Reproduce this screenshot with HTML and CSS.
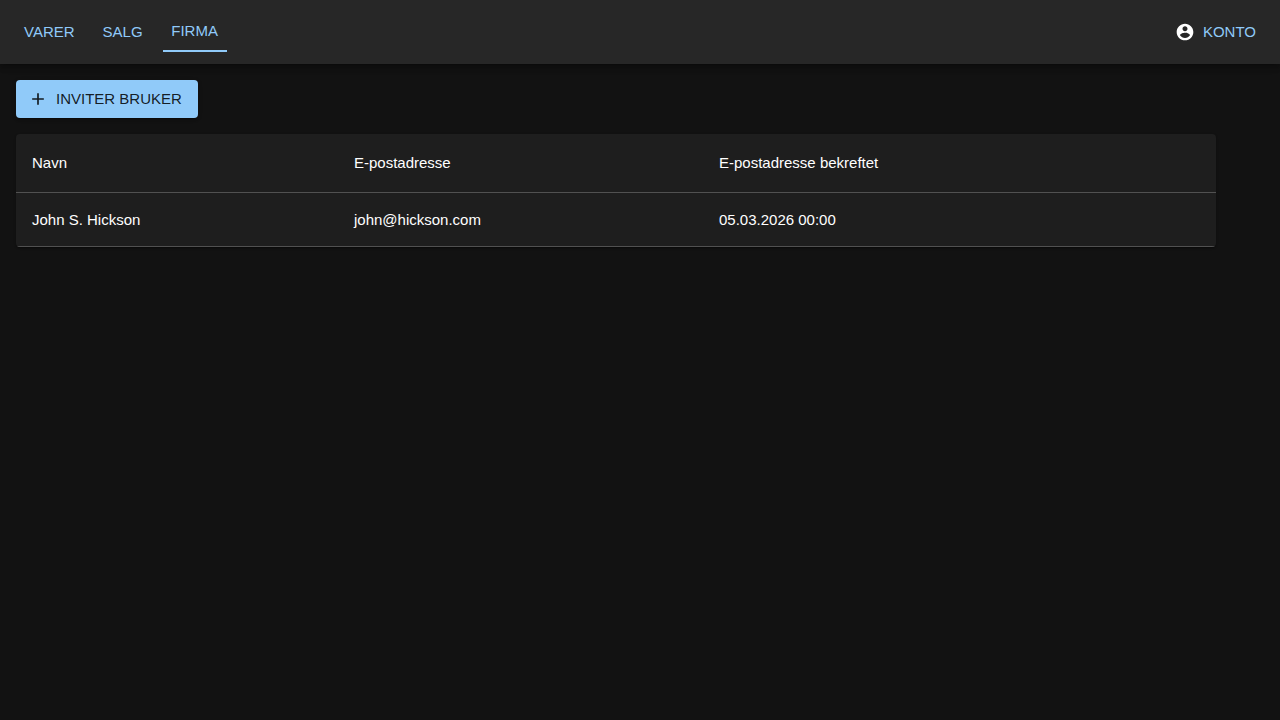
FILE: index.html
```html
<!DOCTYPE html>
<html lang="no">
  <head>
    <meta charset="utf-8" />
    <meta name="viewport" content="width=device-width, initial-scale=1.0" />
    <title>Firma</title>
    <link rel="stylesheet" href="styles.css">
  </head>

  <body>
    <header class="app-bar">
      <nav class="nav-links">
        <a class="nav-link" href="#varer">VARER</a>
        <a class="nav-link" href="#salg">SALG</a>
        <a class="nav-link active" href="#firma" aria-current="page">FIRMA</a>
      </nav>
      <button class="account" type="button">
        <svg class="icon account-icon" viewBox="0 0 24 24" aria-hidden="true">
          <path d="M12 2C6.48 2 2 6.48 2 12s4.48 10 10 10 10-4.48 10-10S17.52 2 12 2zm0 3c1.66 0 3 1.34 3 3s-1.34 3-3 3-3-1.34-3-3 1.34-3 3-3zm0 14.2c-2.500 0-4.710-1.280-6-3.220.03-1.990 4-3.080 6-3.080 1.990 0 5.970 1.090 6 3.080-1.290 1.940-3.500 3.220-6 3.220z" />
        </svg>
        KONTO
      </button>
    </header>

    <main class="content">
      <button class="invite" type="button">
        <svg class="icon" viewBox="0 0 24 24" aria-hidden="true">
          <path d="M19 13h-6v6h-2v-6H5v-2h6V5h2v6h6v2z" />
        </svg>
        INVITER BRUKER
      </button>

      <div class="paper">
        <table class="users">
          <thead>
            <tr>
              <th class="col-name">Navn</th>
              <th class="col-email">E-postadresse</th>
              <th>E-postadresse bekreftet</th>
            </tr>
          </thead>
          <tbody>
            <tr>
              <td>John S. Hickson</td>
              <td>john@hickson.com</td>
              <td>05.03.2026 00:00</td>
            </tr>
          </tbody>
        </table>
      </div>
    </main>
  </body>
</html>
```

FILE: styles.css
```css
* {
  box-sizing: border-box;
}

body {
  margin: 0;
  background-color: #121212;
  color: #fff;
  font-family: "Liberation Sans", Arial, sans-serif;
  font-size: 15px;
}

/* Top bar */
.app-bar {
  display: flex;
  align-items: center;
  justify-content: space-between;
  min-height: 64px;
  padding: 0 16px;
  background-color: #272727;
  box-shadow: 0 2px 4px -1px rgba(0, 0, 0, 0.2),
    0 4px 5px 0 rgba(0, 0, 0, 0.14),
    0 1px 10px 0 rgba(0, 0, 0, 0.12);
}

.nav-links {
  display: flex;
  align-items: center;
  gap: 8px;
}

.nav-link,
.account {
  min-width: 64px;
  padding: 6px 8px;
  border: 0;
  border-radius: 4px;
  background: none;
  color: #90caf9;
  font: inherit;
  line-height: 26px;
  text-align: center;
  text-decoration: none;
}

.nav-link.active {
  border-bottom: 2px solid #90caf9;
  border-radius: 0;
}

.icon {
  width: 20px;
  height: 20px;
  fill: currentColor;
}

.account {
  display: flex;
  align-items: center;
  gap: 8px;
  cursor: pointer;
}

.account-icon {
  color: #fff;
}

/* Page content */
.content {
  max-width: 1232px;
  padding: 16px;
}

.invite {
  display: flex;
  align-items: center;
  gap: 8px;
  padding: 6px 16px 6px 12px;
  border: 0;
  border-radius: 4px;
  background-color: #90caf9;
  color: rgba(0, 0, 0, 0.87);
  font: inherit;
  line-height: 26px;
  cursor: pointer;
  box-shadow: 0 3px 1px -2px rgba(0, 0, 0, 0.2),
    0 2px 2px 0 rgba(0, 0, 0, 0.14),
    0 1px 5px 0 rgba(0, 0, 0, 0.12);
}

.paper {
  margin-top: 16px;
  overflow: hidden;
  border-radius: 4px;
  background-color: #1e1e1e;
  box-shadow: 0 2px 1px -1px rgba(0, 0, 0, 0.2),
    0 1px 1px 0 rgba(0, 0, 0, 0.14),
    0 1px 3px 0 rgba(0, 0, 0, 0.12);
}

.users {
  width: 100%;
  border-collapse: collapse;
}

.users th,
.users td {
  padding: 16px;
  border-bottom: 1px solid #515151;
  font-weight: 400;
  line-height: 21px;
  text-align: left;
}

.users th {
  line-height: 26px;
}

.col-name {
  width: 322px;
}

.col-email {
  width: 365px;
}
```
